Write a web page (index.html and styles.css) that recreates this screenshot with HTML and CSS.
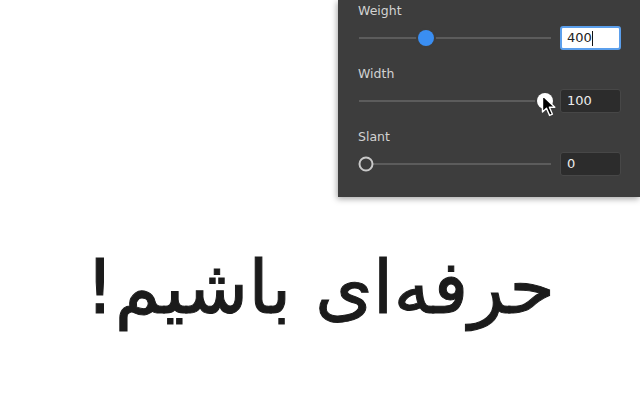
FILE: index.html
```html
<!DOCTYPE html>
<html lang="fa">
<head>
<meta charset="utf-8">
<link rel="stylesheet" href="styles.css">
</head>
<body>
<div class="page">
  <div class="panel">
    <div class="group">
      <div class="label">Weight</div>
      <div class="row">
        <div class="track"><span class="thumb thumb-blue" style="left:67px"></span></div>
        <div class="field field-active">400<span class="caret"></span></div>
      </div>
    </div>
    <div class="group">
      <div class="label">Width</div>
      <div class="row">
        <div class="track"><span class="thumb thumb-white" style="left:186px"></span>
          <svg class="pointer" width="16" height="24" viewBox="0 0 16 24"><path d="M1.5 1.5 L1.5 18 L5.5 14.2 L8.6 21.4 L11.4 20.2 L8.4 13.2 L13.8 13.2 Z" fill="#000" stroke="#fff" stroke-width="1.4" stroke-linejoin="round"/></svg>
        </div>
        <div class="field">100</div>
      </div>
    </div>
    <div class="group">
      <div class="label">Slant</div>
      <div class="row">
        <div class="track"><span class="thumb thumb-ring" style="left:7px"></span></div>
        <div class="field">0</div>
      </div>
    </div>
  </div>
  <div class="headline" dir="rtl">حرفه‌ای باشیم!</div>
</div>
</body>
</html>
```
FILE: styles.css
```css
html, body {
  margin: 0;
  padding: 0;
  background: #ffffff;
}
.page {
  width: 640px;
  height: 400px;
  overflow: hidden;
  display: flex;
  flex-direction: column;
}
.panel {
  margin-left: 338px;
  width: 302px;
  height: 197px;
  box-sizing: border-box;
  background: #3d3d3d;
  padding: 3px 19px 0 20px;
  box-shadow: -1px 2px 6px rgba(0,0,0,0.35);
  font-family: "DejaVu Sans", "Liberation Sans", sans-serif;
}
.group {
  height: 63px;
}
.label {
  height: 16px;
  line-height: 16px;
  font-size: 12.5px;
  color: #d2d2d2;
  margin-bottom: 7px;
}
.row {
  display: flex;
  align-items: center;
  gap: 9px;
  height: 24px;
}
.track {
  position: relative;
  flex: 1;
  height: 2px;
  margin-left: 1px;
  background: #5c5c5c;
}
.thumb {
  position: absolute;
  top: 1px;
  border-radius: 50%;
  transform: translate(-50%, -50%);
}
.thumb-blue {
  width: 16px;
  height: 16px;
  background: #3a8ef2;
  box-shadow: 0 0 0 2px #3d3d3d;
}
.thumb-white {
  width: 16px;
  height: 16px;
  background: #ffffff;
  box-shadow: 0 0 0 2px #3d3d3d;
}
.thumb-ring {
  width: 11px;
  height: 11px;
  background: #3d3d3d;
  border: 2.5px solid #c9c9c9;
}
.pointer {
  position: absolute;
  left: 182px;
  top: -6px;
}
.field {
  width: 61px;
  height: 24px;
  box-sizing: border-box;
  border: 1px solid #474747;
  border-radius: 3px;
  background: #2c2c2c;
  color: #ececec;
  font-size: 13px;
  line-height: 22px;
  padding-left: 6px;
}
.field-active {
  background: #ffffff;
  color: #222222;
  border: 2px solid #5b9fec;
  line-height: 20px;
  padding-left: 5px;
}
.caret {
  display: inline-block;
  width: 1px;
  height: 15px;
  background: #111;
  vertical-align: middle;
  margin-left: 0px;
}
.headline {
  margin-top: 40px;
  text-align: center;
  font-family: "DejaVu Sans", sans-serif;
  font-size: 74px;
  line-height: 100px;
  color: #1b1b1b;
  -webkit-text-stroke: 1px #1b1b1b;
}
```
